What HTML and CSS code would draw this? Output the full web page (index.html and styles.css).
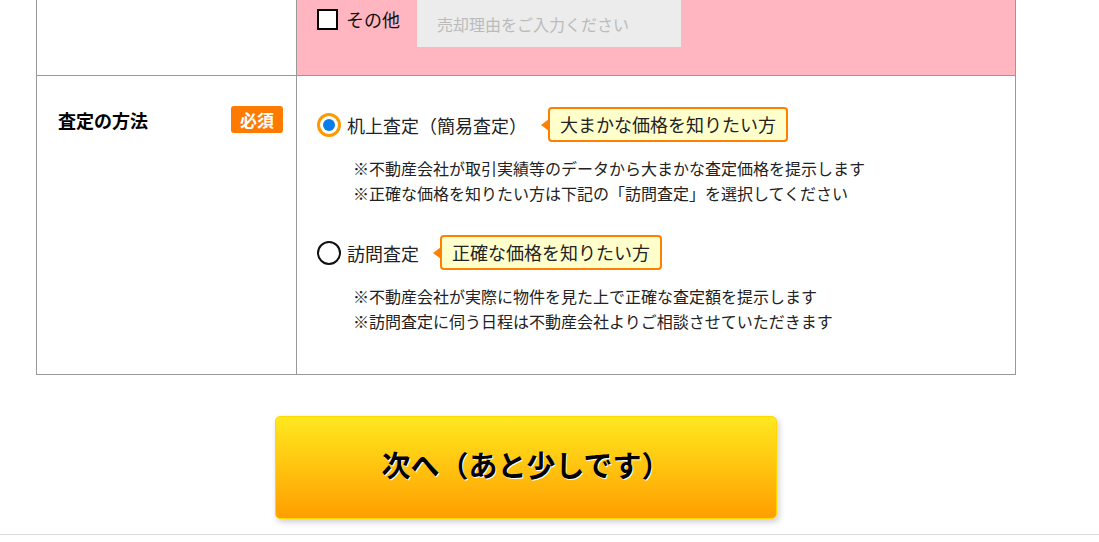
FILE: index.html
```html
<!DOCTYPE html>
<html lang="ja">
<head>
  <meta charset="UTF-8" />
  <meta name="viewport" content="width=device-width, initial-scale=1" />
  <title>査定の方法</title>
  <link rel="stylesheet" href="styles.css">
</head>
<body>
  <main class="form-wrap">
    <table class="form-table">
      <colgroup>
        <col class="col-head">
        <col>
      </colgroup>
      <tr class="row-reason">
        <th></th>
        <td class="pink">
          <div class="reason-other">
            <label class="check"><span class="check-box"></span>その他</label>
            <input type="text" class="reason-input" placeholder="売却理由をご入力ください" />
          </div>
        </td>
      </tr>
      <tr class="row-method">
        <th>
          <div class="th-inner">
            <span>査定の方法</span>
            <span class="required">必須</span>
          </div>
        </th>
        <td>
          <div class="option">
            <label class="radio"><span class="radio-mark checked"></span>机上査定（簡易査定）</label>
            <span class="hint">大まかな価格を知りたい方</span>
          </div>
          <p class="note">※不動産会社が取引実績等のデータから大まかな査定価格を提示します<br>※正確な価格を知りたい方は下記の「訪問査定」を選択してください</p>

          <div class="option second">
            <label class="radio"><span class="radio-mark"></span>訪問査定</label>
            <span class="hint">正確な価格を知りたい方</span>
          </div>
          <p class="note">※不動産会社が実際に物件を見た上で正確な査定額を提示します<br>※訪問査定に伺う日程は不動産会社よりご相談させていただきます</p>
        </td>
      </tr>
    </table>

    <div class="actions">
      <button type="submit" class="next-btn">次へ（あと少しです）</button>
    </div>
  </main>
  <footer class="page-foot"></footer>
</body>
</html>
```

FILE: styles.css
```css
body {
  font-family: "Noto Sans CJK JP", "Noto Sans", sans-serif;
  margin: 0;
  background: #fff;
  color: #222;
  overflow: hidden;
}
.form-wrap {
  width: 980px;
  margin: -10px 0 0 36px;
}
.form-table {
  width: 980px;
  border-collapse: collapse;
  table-layout: fixed;
}
.col-head {
  width: 260px;
}
.form-table th,
.form-table td {
  border: 1px solid #999;
  vertical-align: middle;
  text-align: left;
}
.form-table th {
  padding: 0 13px 0 21px;
  background: #fff;
}
.form-table td {
  padding: 0 20px;
}
.pink {
  background: #ffb6c1;
}
.row-reason td {
  padding-bottom: 28px;
}
.reason-other {
  display: flex;
  align-items: center;
}
.check {
  display: flex;
  align-items: center;
  font-size: 18px;
  line-height: 24px;
  color: #111;
}
.check-box {
  width: 17px;
  height: 17px;
  border: 2px solid #000;
  background: #fff;
  margin-right: 8px;
}
.reason-input {
  margin-left: 17px;
  width: 264px;
  height: 56px;
  box-sizing: border-box;
  border: none;
  background: #ececec;
  padding: 10px 20px 0;
  font-family: inherit;
  font-size: 16px;
}
.reason-input::placeholder {
  color: #bbb;
}

.row-method th {
  vertical-align: top;
  padding-top: 30px;
}
.th-inner {
  display: flex;
  justify-content: space-between;
  align-items: center;
  font-size: 18px;
  font-weight: bold;
  color: #000;
}
.required {
  background: #ff7a00;
  color: #fff;
  font-size: 17px;
  line-height: 27px;
  padding: 0 9px;
  border-radius: 3px;
}
.row-method td {
  padding-top: 31px;
  padding-bottom: 40px;
}
.option {
  display: flex;
  align-items: center;
  height: 35px;
}
.option.second {
  margin-top: 29px;
}
.radio {
  display: flex;
  align-items: center;
  font-size: 18px;
  line-height: 24px;
  color: #222;
}
.radio-mark {
  width: 20px;
  height: 20px;
  border: 2px solid #111;
  border-radius: 50%;
  margin-right: 6px;
  position: relative;
  background: #fff;
}
.radio-mark.checked {
  border: 3px solid #ff9900;
  width: 18px;
  height: 18px;
}
.radio-mark.checked::after {
  content: "";
  position: absolute;
  left: 3px;
  top: 3px;
  width: 12px;
  height: 12px;
  border-radius: 50%;
  background: #0a7de8;
}
.hint {
  position: relative;
  margin-left: 21px;
  height: 31px;
  line-height: 31px;
  padding: 0 10px;
  font-size: 18px;
  color: #222;
  background: #ffffcc;
  border: 2px solid #ff8000;
  border-radius: 4px;
}
.hint::before {
  content: "";
  position: absolute;
  left: -9px;
  top: 10px;
  border-style: solid;
  border-width: 6px 8px 6px 0;
  border-color: transparent #ff8000 transparent transparent;
}
.note {
  margin: 14px 0 0 36px;
  font-size: 16px;
  line-height: 25px;
  color: #222;
}

.actions {
  display: flex;
  justify-content: center;
  padding-top: 41px;
}
.next-btn {
  width: 502px;
  height: 103px;
  border: 1px solid #ffd800;
  border-radius: 5px;
  background: linear-gradient(#ffe81f, #ff9e00);
  box-shadow: 2px 3px 6px rgba(0,0,0,0.2);
  font-family: inherit;
  font-size: 29px;
  font-weight: bold;
  color: #000;
  text-shadow: 1px 1px 0 #fff;
  padding-bottom: 8px;
  cursor: pointer;
}
.page-foot {
  margin-top: 15px;
  border-top: 1px solid #ddd;
  height: 20px;
}
```
